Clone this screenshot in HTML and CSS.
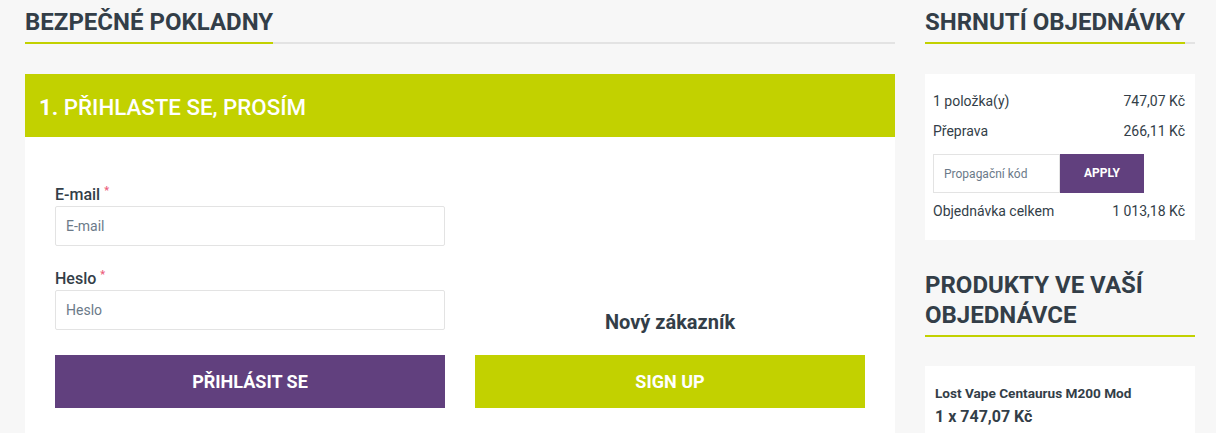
FILE: index.html
```html
<!DOCTYPE html>
<html lang="cs">
<head>
<meta charset="utf-8">
<title>Bezpečné pokladny</title>
<link rel="stylesheet" href="styles.css">
</head>
<body>
<div class="page">
  <main class="main-col">
    <div class="title-wrap"><h1 class="title">BEZPEČNÉ POKLADNY</h1></div>
    <section class="step">
      <div class="step-head"><strong>1.</strong>&nbsp;PŘIHLASTE SE, PROSÍM</div>
      <div class="step-body">
        <div class="login-col">
          <label class="field-label">E-mail<span class="req">*</span></label>
          <input class="field" type="text" placeholder="E-mail">
          <label class="field-label second">Heslo<span class="req">*</span></label>
          <input class="field" type="password" placeholder="Heslo">
          <button class="btn btn-purple">PŘIHLÁSIT SE</button>
        </div>
        <div class="signup-col">
          <div class="new-customer">Nový zákazník</div>
          <button class="btn btn-green">SIGN UP</button>
        </div>
      </div>
    </section>
  </main>
  <aside class="side-col">
    <div class="title-wrap"><h2 class="title">SHRNUTÍ OBJEDNÁVKY</h2></div>
    <div class="summary">
      <div class="sum-row"><span>1 položka(y)</span><span>747,07 Kč</span></div>
      <div class="sum-row row2"><span>Přeprava</span><span>266,11 Kč</span></div>
      <div class="promo">
        <input class="promo-input" type="text" placeholder="Propagační kód">
        <button class="promo-btn">APPLY</button>
      </div>
      <div class="sum-row total"><span>Objednávka celkem</span><span>1 013,18 Kč</span></div>
    </div>
    <div class="title-wrap products-title"><h2 class="title">PRODUKTY VE VAŠÍ OBJEDNÁVCE</h2></div>
    <div class="product">
      <div class="product-name">Lost Vape Centaurus M200 Mod</div>
      <div class="product-price">1 x 747,07 Kč</div>
    </div>
  </aside>
</div>
</body>
</html>
```
FILE: styles.css
```css
* { box-sizing: border-box; }
html, body { margin: 0; padding: 0; }
body {
  background: #f7f7f7;
  font-family: Roboto, "Liberation Sans", Arial, sans-serif;
  color: #333e48;
  overflow: hidden;
}
.page {
  display: flex;
  gap: 30px;
  padding: 7px 21px 0 25px;
}
.main-col { flex: 1; min-width: 0; }
.side-col { width: 270px; flex: none; }

.title-wrap {
  border-bottom: 2px solid #e3e3e3;
}
.title {
  display: inline-block;
  margin: 0 0 -2px 0;
  padding-bottom: 5px;
  border-bottom: 2px solid #c2d100;
  font-size: 24px;
  line-height: 30px;
  font-weight: 700;
  color: #333e48;
}

.step { margin-top: 30px; }
.step-head {
  height: 63px;
  background: #c2d100;
  color: #fff;
  display: flex;
  align-items: center;
  padding: 2px 14px 0;
  font-size: 22.3px;
  font-weight: 500;
}
.step-head strong { font-weight: 700; }
.step-body {
  background: #fff;
  display: flex;
  gap: 30px;
  padding: 48px 30px 40px;
}
.login-col, .signup-col {
  width: 390px;
  display: flex;
  flex-direction: column;
}
.signup-col { justify-content: flex-end; }
.field-label {
  font-size: 16px;
  line-height: 20px;
  font-weight: 500;
  color: #333e48;
  margin-bottom: 1px;
}
.field-label.second { margin-top: 23px; }
.req {
  color: #ec5a7a;
  font-size: 11px;
  vertical-align: top;
  position: relative;
  top: -4px;
  margin-left: 4px;
}
.field {
  height: 40px;
  border: 1px solid #e3e3e3;
  border-radius: 2px;
  padding: 0 10px;
  font-family: inherit;
  font-size: 14px;
  color: #333e48;
  background: #fff;
  outline: none;
}
.field::placeholder { color: #6b7a89; }
.btn {
  height: 53px;
  border: none;
  color: #fff;
  font-family: inherit;
  font-size: 18px;
  font-weight: 700;
  margin-top: 25px;
  cursor: pointer;
}
.btn-purple { background: #61407e; }
.btn-green { background: #c2d100; margin-top: 0; }
.new-customer {
  text-align: center;
  font-size: 20px;
  line-height: 24px;
  font-weight: 700;
  margin-bottom: 21px;
  color: #333e48;
}

.summary {
  margin-top: 30px;
  background: #fff;
  padding: 17px 10px 19px 8px;
}
.sum-row {
  display: flex;
  justify-content: space-between;
  font-size: 14px;
  line-height: 20px;
  color: #333e48;
}
.sum-row.row2 { margin-top: 10px; }
.sum-row.total { margin-top: 8px; }
.promo {
  display: flex;
  margin-top: 13px;
  height: 39px;
}
.promo-input {
  width: 127px;
  border: 1px solid #e3e3e3;
  padding: 0 10px;
  font-family: inherit;
  font-size: 12px;
  outline: none;
}
.promo-input::placeholder { color: #6b7a89; }
.promo-btn {
  width: 84px;
  border: none;
  background: #61407e;
  color: #fff;
  font-family: inherit;
  font-size: 12px;
  font-weight: 700;
  padding-bottom: 2px;
}

.products-title { margin-top: 30px; }
.products-title .title { display: block; }
.product {
  margin-top: 29px;
  background: #fff;
  padding: 17px 10px 20px;
}
.product-name {
  font-size: 13.6px;
  line-height: 20px;
  font-weight: 700;
}
.product-price {
  font-size: 16px;
  line-height: 22px;
  font-weight: 700;
  margin-top: 3px;
}
```
